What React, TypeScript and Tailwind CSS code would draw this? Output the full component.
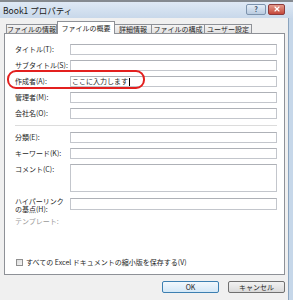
import React from "react";
import { X } from "lucide-react";

const tabs = [
  { label: "ファイルの情報", w: "w-[51px]" },
  { label: "ファイルの概要", w: "w-[58px]", active: true },
  { label: "詳細情報", w: "w-[38px]" },
  { label: "ファイルの構成", w: "w-[54px]" },
  { label: "ユーザー設定", w: "w-[48px]" },
];

const Field = ({ label, value }: { label: string; value?: string }) => (
  <div className="flex items-center h-[11px]">
    <div className="w-[55px] shrink-0 leading-none">{label}</div>
    <div className="flex-1 h-[11px] bg-white border border-[#c3c6cc] border-t-[#aeb1b7] flex items-center pl-[1px] leading-none">
      {value && (
        <>
          <span>{value}</span>
          <span className="w-px h-[8px] bg-black ml-[1px]" />
        </>
      )}
    </div>
  </div>
);

export default function App() {
  return (
    <div className="relative w-[293px] h-[300px] overflow-hidden bg-[#f0f0f0] text-[#1e1e1e] text-[7px] font-['Noto_Sans_CJK_JP',sans-serif]">
      <div className="h-[2px] bg-[#858a90]" />
      {/* title bar */}
      <div className="h-[16px] flex items-center pl-[3px] pr-[8px] bg-gradient-to-b from-[#dfe9f5] to-[#c8d8ea]">
        <div className="text-[8.5px] leading-none text-[#1a1a1a]">Book1 プロパティ</div>
        <div className="flex-1" />
        <div className="flex items-center gap-[2px] -mt-[2px]">
          <div className="w-[20px] h-[11px] rounded-[2px] border border-[#7d93ad] bg-gradient-to-b from-[#e4edf7] to-[#b9cbe0] flex items-center justify-center text-[7px] leading-none text-[#33475e] font-bold">
            ?
          </div>
          <div className="w-[17px] h-[11px] rounded-[2px] border border-[#8e3a3a] bg-gradient-to-b from-[#e49a8c] to-[#c4473a] flex items-center justify-center">
            <X size={8} strokeWidth={3.5} color="#ffffff" />
          </div>
        </div>
      </div>

      <div className="flex h-[282px]">
        <div className="w-[288px] flex flex-col">
          {/* tabs */}
          <div className="flex items-end h-[15px] pl-[6px] relative z-10">
            {tabs.map((t) =>
              t.active ? (
                <div
                  key={t.label}
                  className={`${t.w} h-[13px] -mb-px bg-white border border-b-0 border-[#8e9197] flex items-center justify-center leading-none`}
                >
                  {t.label}
                </div>
              ) : (
                <div
                  key={t.label}
                  className={`${t.w} h-[9px] bg-gradient-to-b from-[#f4f4f4] to-[#e1e1e1] border border-b-0 border-[#8e9197] -ml-px first:ml-0 flex items-center justify-center leading-none`}
                >
                  {t.label}
                </div>
              )
            )}
          </div>

          {/* panel */}
          <div className="ml-[4px] w-[281px] h-[242px] bg-white border border-[#8e9197] flex flex-col pt-[10px] pl-[10px] pr-[7px]">
            <div className="flex flex-col gap-[5px]">
              <Field label="タイトル(T):" />
              <Field label="サブタイトル(S):" />
              <Field label="作成者(A):" value="ここに入力します" />
              <Field label="管理者(M):" />
              <Field label="会社名(O):" />
            </div>
            <div className="h-px bg-[#dcdcdc] mt-[6px] mb-[6px]" />
            <div className="flex flex-col gap-[5px]">
              <Field label="分類(E):" />
              <Field label="キーワード(K):" />
              <div className="flex items-start">
                <div className="w-[55px] shrink-0 leading-none pt-[2px]">コメント(C):</div>
                <div className="flex-1 h-[28px] bg-white border border-[#c3c6cc] border-t-[#aeb1b7]" />
              </div>
              <div className="flex items-start mt-[1px]">
                <div className="w-[55px] shrink-0 flex flex-col gap-[1px] leading-none">
                  <span>ハイパーリンク</span>
                  <span>の基点(H):</span>
                </div>
                <div className="flex-1 h-[12px] bg-white border border-[#c3c6cc] border-t-[#aeb1b7]" />
              </div>
            </div>
            <div className="mt-[5px] leading-none text-[#9a9a9a]">テンプレート:</div>
            <div className="flex-1" />
            <div className="flex items-center gap-[3px] pl-[1px] mb-[8px]">
              <div className="w-[7px] h-[7px] border border-[#8f8f8f] bg-gradient-to-br from-[#dcdcdc] to-[#f4f4f4]" />
              <div className="leading-none">すべての Excel ドキュメントの縮小版を保存する(V)</div>
            </div>
          </div>

          {/* buttons */}
          <div className="flex justify-end gap-[9px] mt-[6px] pr-[3px]">
            <div className="w-[57px] h-[12px] rounded-[2px] border border-[#3c7fb1] bg-gradient-to-b from-[#f2f8fd] to-[#d4e8f7] flex items-center justify-center leading-none">
              OK
            </div>
            <div className="w-[57px] h-[12px] rounded-[2px] border border-[#707070] bg-gradient-to-b from-[#f2f2f2] to-[#dadada] flex items-center justify-center leading-none">
              キャンセル
            </div>
          </div>
        </div>
        <div className="flex-1 border-l border-[#8aa3bd] bg-[#c6d7e9]" />
      </div>

      {/* red annotation */}
      <div className="absolute left-[7px] top-[70px] w-[138px] h-[19px] rounded-[9px] border-2 border-[#e3201f]" />
    </div>
  );
}
